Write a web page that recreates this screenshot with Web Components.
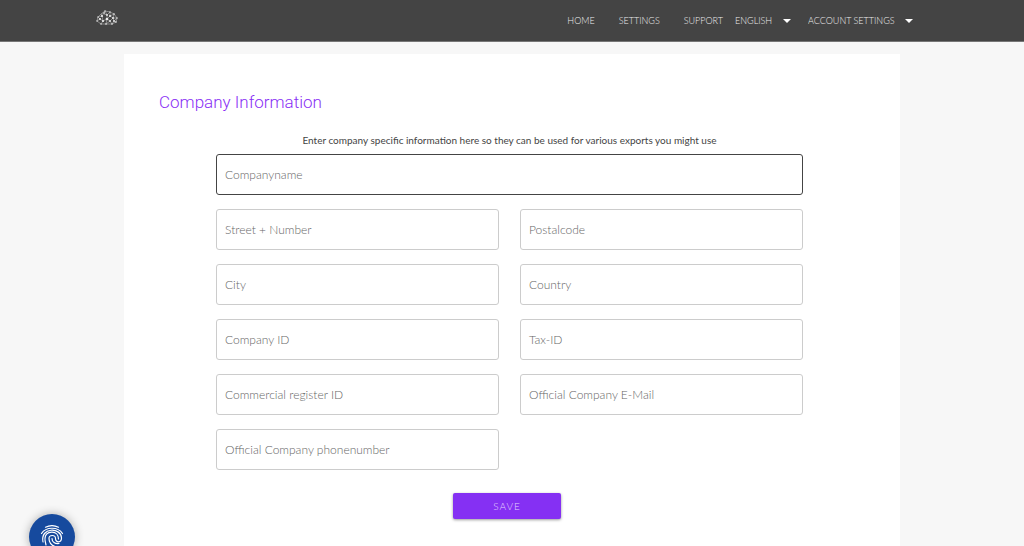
<!DOCTYPE html>
<html lang="en">
<head>
<meta charset="utf-8">
<meta name="viewport" content="width=device-width, initial-scale=1">
<title>Company Information</title>
<style>
  body { margin: 0; background: #f7f7f7; font-family: Lato, "Open Sans", sans-serif; font-weight: 300; color: #222; }
</style>
</head>
<body>
<app-page>
  <app-bar slot="bar">
    <brand-logo slot="logo"></brand-logo>
    <nav-link>HOME</nav-link>
    <nav-link>SETTINGS</nav-link>
    <nav-link>SUPPORT</nav-link>
    <nav-select label="Language" value="ENGLISH" class="language"></nav-select>
    <nav-select label="Account" value="ACCOUNT SETTINGS" class="account"></nav-select>
  </app-bar>
  <company-form>
    <span slot="title">Company Information</span>
    <span slot="hint">Enter company specific information here so they can be used for various exports you might use</span>
    <text-field label="Companyname" wide></text-field>
    <text-field label="Street + Number"></text-field>
    <text-field label="Postalcode"></text-field>
    <text-field label="City"></text-field>
    <text-field label="Country"></text-field>
    <text-field label="Company ID"></text-field>
    <text-field label="Tax-ID"></text-field>
    <text-field label="Commercial register ID"></text-field>
    <text-field label="Official Company E-Mail"></text-field>
    <text-field label="Official Company phonenumber"></text-field>
    <save-button slot="action">SAVE</save-button>
  </company-form>
</app-page>
<privacy-badge></privacy-badge>

<script>
const define = (name, render) => customElements.define(name, class extends HTMLElement {
  constructor() {
    super();
    this.attachShadow({ mode: 'open' }).innerHTML = render(this);
  }
});

define('app-page', () => `
  <style>
    :host { display: flex; flex-direction: column; min-height: 100vh; }
    main { flex: 1; display: flex; box-sizing: border-box; width: 100%; max-width: 800px; margin: 0 auto; padding: 12px 12px 0; }
    ::slotted(company-form) { flex: 1; }
  </style>
  <slot name="bar"></slot>
  <main><slot></slot></main>`);

define('app-bar', () => `
  <style>
    :host { display: block; background: #444; border-bottom: 1px solid #777; color: #eee; font-size: 9px; line-height: 16px; }
    header { display: flex; justify-content: space-between; align-items: center; height: 41px; max-width: 817px; margin: 0 auto; padding: 0 103px 0 88px; }
    nav { display: flex; align-items: center; gap: 24px; }
    ::slotted(brand-logo) { margin-bottom: 6px; }
    ::slotted(.language) { margin-left: -12px; }
    ::slotted(.account) { margin-left: -7px; }
  </style>
  <header><slot name="logo"></slot><nav><slot></slot></nav></header>`);

define('brand-logo', () => `
  <style>
    :host { display: block; }
    a, svg { display: block; }
  </style>
  <a href="#" aria-label="Start page">
    <svg width="22" height="15" viewBox="0 0 22 15" fill="none">
      <path d="M1 11 2 7 5 4 9 1 14 2 18 4 21 8 20 12 16 14 10 14 5 14 1 11 4 9 2 7 6 6 5 4 8 4 9 1 11 5 14 2 14 6 18 4 17 8 21 8 18 11 20 12M4 9 7 11 5 14M6 6 7 11 11 9 11 5 8 4M11 9 14 6 17 8 14 11 11 9 10 14 14 11 16 14 18 11 17 8" stroke="#999" stroke-width=".8"/>
      <g fill="#eee">
        <circle cx="4" cy="9" r="1.1"/><circle cx="6" cy="6" r="1.1"/><circle cx="7" cy="11" r="1.1"/><circle cx="11" cy="9" r="1.300"/>
        <circle cx="11" cy="5" r=".9"/><circle cx="14" cy="6" r="1"/><circle cx="17" cy="8" r="1"/><circle cx="14" cy="11" r=".9"/>
        <circle cx="18" cy="11" r=".9"/><circle cx="8" cy="3" r=".8"/><circle cx="2" cy="7" r=".7"/><circle cx="1" cy="11" r=".7"/>
        <circle cx="5" cy="14" r=".7"/><circle cx="10" cy="14" r=".8"/><circle cx="16" cy="14" r=".8"/><circle cx="20" cy="12" r=".8"/>
        <circle cx="18" cy="4" r=".8"/><circle cx="14" cy="2" r=".7"/><circle cx="9" cy="1" r=".7"/><circle cx="21" cy="8" r=".7"/>
      </g>
    </svg>
  </a>`);

define('nav-link', () => `
  <style>
    :host { display: block; }
    a { color: inherit; text-decoration: none; }
    a:hover { color: #fff; }
  </style>
  <a href="#"><slot></slot></a>`);

define('nav-select', el => `
  <style>
    :host { display: grid; grid-template-columns: auto 8px; column-gap: 10px; align-items: center; }
    select { grid-area: 1 / 1 / 2 / 3; appearance: none; border: 0; margin: 0; padding: 0 18px 0 0; background: none; color: inherit; font: inherit; cursor: pointer; }
    option { color: #222; }
    svg { grid-area: 1 / 2; display: block; pointer-events: none; }
  </style>
  <select aria-label="${el.getAttribute('label')}"><option>${el.getAttribute('value')}</option></select>
  <svg width="8" height="4" viewBox="0 0 8 4" fill="#fff"><path d="M0 0h8L4 4z"/></svg>`);

define('company-form', () => `
  <style>
    :host { display: block; background: #fff; }
    form { padding: 36px 97px 26px 92px; }
    h1 { margin: 0 0 20px -57px; font-family: Roboto, sans-serif; font-size: 17px; line-height: 24px; font-weight: inherit; color: #8930f5; }
    p { margin: 0 0 8px; font-size: 10px; line-height: 12px; text-align: center; font-weight: 400; color: #444; }
    .fields { display: grid; grid-template-columns: 1fr 1fr; gap: 14px 21px; }
    footer { display: flex; justify-content: center; padding: 23px 5px 0 0; }
  </style>
  <form onsubmit="return false">
    <h1><slot name="title"></slot></h1>
    <p><slot name="hint"></slot></p>
    <div class="fields"><slot></slot></div>
    <footer><slot name="action"></slot></footer>
  </form>`);

define('text-field', el => `
  <style>
    :host { display: grid; align-items: center; font-size: 12px; line-height: 16px; }
    :host([wide]) { grid-column: 1 / -1; }
    label, input { grid-area: 1 / 1; }
    label { justify-self: start; padding-left: 9px; color: #666; pointer-events: none; }
    input { box-sizing: border-box; width: 100%; min-width: 0; height: 41px; margin: 0; padding: 0 9px; border: 1px solid #ccc; border-radius: 3px; background: none; color: #222; font: inherit; }
    :host([wide]) input, input:focus { border-color: #444; outline: none; }
    input:not(:placeholder-shown) + label { visibility: hidden; }
  </style>
  <input id="field" type="text" placeholder=" ">
  <label for="field">${el.getAttribute('label')}</label>`);

define('save-button', () => `
  <style>
    :host { display: block; }
    button { display: block; width: 108px; height: 26px; margin: 0; padding: 0; border: 0; border-radius: 2px; background: #8530f3; color: #e4d0fd; font: inherit; font-size: 10px; letter-spacing: 1px; box-shadow: 0 1px 3px rgba(0, 0, 0, .4); cursor: pointer; }
  </style>
  <button type="submit"><slot></slot></button>`);

define('privacy-badge', () => `
  <style>
    :host { position: fixed; left: 29px; bottom: -14px; }
    button { display: grid; place-items: center; width: 46px; height: 46px; margin: 0; padding: 0; border: 0; border-radius: 50%; background: #164a9e; box-shadow: 0 0 10px rgba(0, 0, 0, .3); cursor: pointer; }
    svg { display: block; }
  </style>
  <button aria-label="Privacy settings">
    <svg width="24" height="24" viewBox="0 0 24 24" fill="none" stroke="#fff" stroke-width="1.2" stroke-linecap="round">
      <path d="M5.500 2.200Q12-1 18.500 2.200"/>
      <path d="M1.500 8.500C6 1.500 18 1.500 22.500 8.500"/>
      <path d="M3 17C0 2 21 2 21.500 13C21.500 18 15.500 18 15.500 13.500C15.500 9.500 9 9.500 9 13.500C9 18 11 20 15 21.500"/>
      <path d="M6 20C2.500 8 9 7.200 12 7.200C16 7.200 18.500 10 18.500 14"/>
      <path d="M12 13.500C12 17 15 19 19 18.500"/>
    </svg>
  </button>`);
</script>
</body>
</html>
